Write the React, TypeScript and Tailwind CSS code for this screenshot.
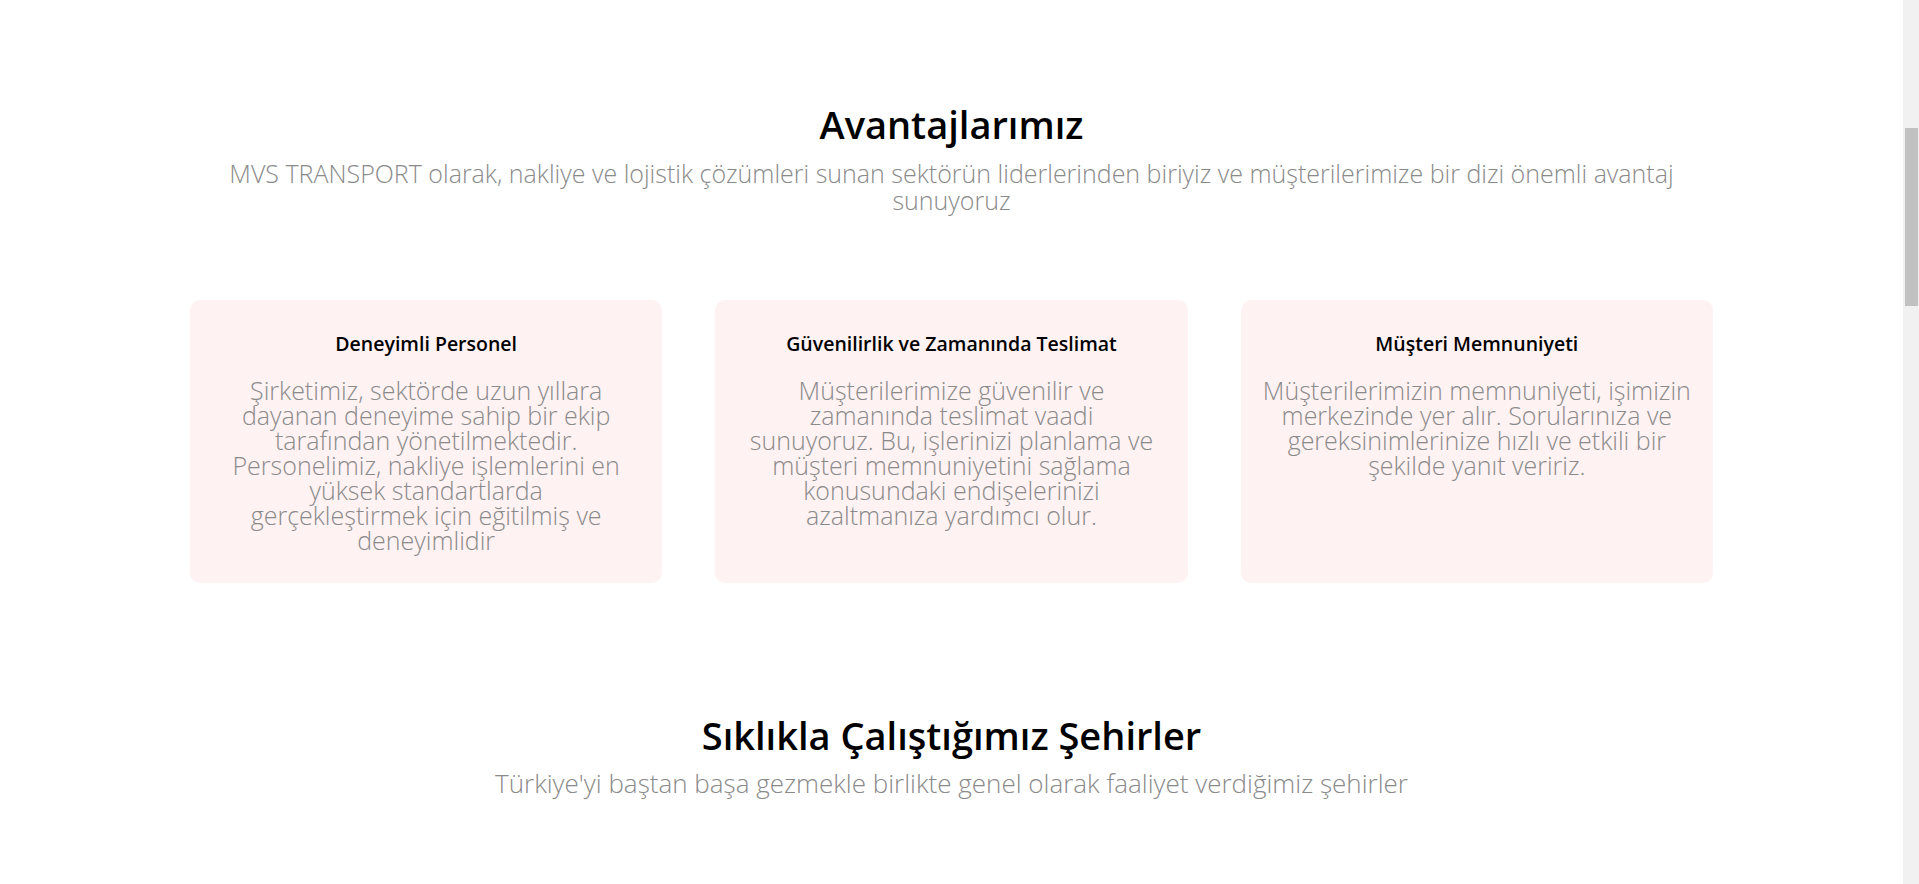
import React from "react";

type Advantage = {
  title: string;
  text: string;
};

// line breaks follow the original layout
const advantages: Advantage[] = [
  {
    title: "Deneyimli Personel",
    text: "Şirketimiz, sektörde uzun yıllara\ndayanan deneyime sahip bir ekip\ntarafından yönetilmektedir.\nPersonelimiz, nakliye işlemlerini en\nyüksek standartlarda\ngerçekleştirmek için eğitilmiş ve\ndeneyimlidir",
  },
  {
    title: "Güvenilirlik ve Zamanında Teslimat",
    text: "Müşterilerimize güvenilir ve\nzamanında teslimat vaadi\nsunuyoruz. Bu, işlerinizi planlama ve\nmüşteri memnuniyetini sağlama\nkonusundaki endişelerinizi\nazaltmanıza yardımcı olur.",
  },
  {
    title: "Müşteri Memnuniyeti",
    text: "Müşterilerimizin memnuniyeti, işimizin\nmerkezinde yer alır. Sorularınıza ve\ngereksinimlerinize hızlı ve etkili bir\nşekilde yanıt veririz.",
  },
];

const AdvantageCard: React.FC<Advantage> = ({ title, text }) => {
  return (
    <div className="bg-[#fff2f2] rounded-[10px] px-[14px] pt-[32px] pb-[30px] text-center">
      <h3 className="text-[19.5px] leading-[24px] font-semibold text-black">{title}</h3>
      <p className="mt-[22px] whitespace-pre-line text-[25px] leading-[25px] font-light text-[#8a8a8a]">{text}</p>
    </div>
  );
};

export default function App() {
  return (
    <div className="flex h-[884px] overflow-hidden bg-white font-['Open_Sans',sans-serif]">
      <main className="flex-1">
        <section className="w-[1523px] mx-auto pt-[101px] text-center">
          <h2 className="text-[38px] leading-[46px] font-semibold text-black">Avantajlarımız</h2>
          <p className="mt-[13px] text-[25px] leading-[27px] font-light text-[#8a8a8a]">
            MVS TRANSPORT olarak, nakliye ve lojistik çözümleri sunan sektörün liderlerinden biriyiz ve müşterilerimize bir
            dizi önemli avantaj sunuyoruz
          </p>
          <div className="mt-[86px] grid grid-cols-3 gap-[53px]">
            {advantages.map((a) => (
              <AdvantageCard key={a.title} title={a.title} text={a.text} />
            ))}
          </div>
        </section>

        <section className="w-[1523px] mx-auto mt-[129px] text-center">
          <h2 className="text-[38px] leading-[46px] font-semibold text-black">Sıklıkla Çalıştığımız Şehirler</h2>
          <p className="mt-[12px] text-[26px] leading-[27px] font-light text-[#8a8a8a]">
            Türkiye'yi baştan başa gezmekle birlikte genel olarak faaliyet verdiğimiz şehirler
          </p>
        </section>
      </main>

      {/* page scrollbar */}
      <aside className="w-[16px] shrink-0 bg-[#f1f1f1] pt-[128px]">
        <div className="h-[178px] ml-[2px] mr-[1px] bg-[#c1c1c1]" />
      </aside>
    </div>
  );
}
